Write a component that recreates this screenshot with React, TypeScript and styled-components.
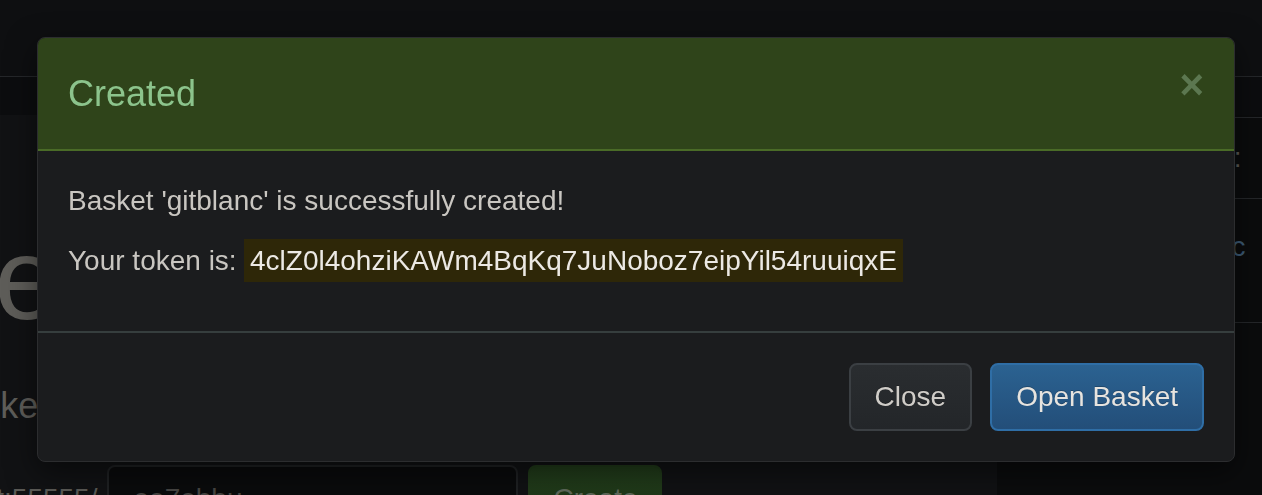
import React from 'react';
import styled, {createGlobalStyle} from 'styled-components';

const GlobalStyle = createGlobalStyle`
  html, body {
    margin: 0;
    padding: 0;
    background: #0e0f11;
    overflow: hidden;
  }
  body {
    font-family: "Liberation Sans", Arial, Helvetica, sans-serif;
  }
  * { box-sizing: border-box; }
`;

const Page = styled.div`
  width: 1262px;
  height: 495px;
  overflow: hidden;
  background: #0e0f11;
`;

const Navbar = styled.div`
  height: 77px;
  border-bottom: 1px solid #25272a;
`;

const SubBar = styled.div`
  height: 38px;
  background: #0c0d0f;
`;

const Main = styled.div`
  display: flex;
  height: 400px;
`;

const LeftCol = styled.div`
  width: 997px;
  flex: none;
  background: #111214;
  overflow: hidden;
`;

const Jumbotron = styled.div`
  width: 1200px;
  margin-left: -380px;
  padding-top: 101px;
  text-align: center;
  color: #5e5d59;
`;

const BigTitle = styled.h1`
  margin: 0 0 37px;
  font-size: 116px;
  line-height: 1.1;
  font-weight: normal;
`;

const Lead = styled.p`
  margin: 0 0 34px;
  font-size: 36px;
  line-height: 1.4;
`;

const FormRow = styled.div`
  display: flex;
  justify-content: center;
  align-items: center;
  gap: 10px;
  padding-left: 46px;
`;

const Label = styled.label`
  font-size: 28px;
  color: #5b5a56;
`;

const NameInput = styled.div`
  width: 411px;
  height: 68px;
  padding: 0 24px;
  background: #0a0b0c;
  border: 2px solid #1f2123;
  border-radius: 8px;
  font-size: 28px;
  line-height: 64px;
  color: #474643;
  text-align: left;
`;

const CreateButton = styled.div`
  width: 134px;
  height: 68px;
  background: linear-gradient(#223d1b, #1c3316);
  border: 2px solid #213a1a;
  border-radius: 8px;
  font-size: 28px;
  line-height: 64px;
  color: #5f6a5b;
`;

const RightCol = styled.div`
  flex: 1;
  background: #0b0c0d;
  padding-top: 2px;
`;

const PanelRow = styled.div<{$indent: number; $height: number}>`
  height: ${p => p.$height}px;
  padding: ${p => (p.$height > 100 ? 28 : 20)}px 0 0 ${p => p.$indent}px;
  border-top: 1px solid #25272a;
  font-size: 28px;
  line-height: 40px;
  color: #5b5a56;
  white-space: nowrap;
`;

const BasketLink = styled.span`
  color: #3d5b76;
`;

const ModalLayer = styled.div`
  position: fixed;
  inset: 0;
  padding: 37px 0 0 37px;
`;

const Dialog = styled.div`
  width: 1198px;
  background: #1b1c1e;
  border: 1px solid #2c2d2f;
  border-radius: 8px;
  box-shadow: 0 10px 30px rgba(0, 0, 0, 0.5);
  overflow: hidden;
`;

const Header = styled.div`
  padding: 30px;
  background: #2f441a;
  border-bottom: 2px solid #4a6b27;
`;

const CloseX = styled.span`
  float: right;
  margin-top: -4px;
  font-size: 42px;
  font-weight: bold;
  line-height: 1;
  color: #5c7750;
`;

const Title = styled.h4`
  margin: 0;
  font-size: 36px;
  line-height: 51px;
  font-weight: normal;
  color: #8cc48c;
`;

const Body = styled.div`
  padding: 30px;
  font-size: 28px;
  line-height: 40px;
  color: #c9c6c1;
  p {
    margin: 0 0 20px;
  }
`;

const Token = styled.mark`
  padding: 5.6px;
  background: #2e2708;
  color: #ece9e4;
`;

const Footer = styled.div`
  display: flex;
  justify-content: flex-end;
  gap: 18px;
  padding: 30px;
  border-top: 2px solid #363e3e;
`;

const Button = styled.button<{$primary?: boolean}>`
  height: 68px;
  padding: 0 24px;
  font-family: "Liberation Sans", Arial, Helvetica, sans-serif;
  font-size: 28px;
  line-height: 64px;
  border-radius: 8px;
  border: 2px solid ${p => (p.$primary ? '#2f6ea6' : '#3b3f43')};
  background: ${p => (p.$primary
    ? 'linear-gradient(#2b6291, #234e79)'
    : 'linear-gradient(#2a2d30, #232629)')};
  color: ${p => (p.$primary ? '#e7e4df' : '#d0cdc8')};
  text-shadow: 0 -1px 0 rgba(0, 0, 0, 0.2);
`;

export default function App() {
  return (
    <Page>
      <GlobalStyle/>
      <Navbar/>
      <SubBar/>
      <Main>
        <LeftCol>
          <Jumbotron>
            <BigTitle>New Basket</BigTitle>
            <Lead>Create a basket to collect and inspect HTTP requests</Lead>
            <FormRow>
              <Label>http://localhost:55555/</Label>
              <NameInput>ee7ebbu</NameInput>
              <CreateButton>Create</CreateButton>
            </FormRow>
          </Jumbotron>
        </LeftCol>
        <RightCol>
          <PanelRow $indent={92} $height={81}>My Baskets:</PanelRow>
          <PanelRow $indent={152} $height={124}>
            <BasketLink>gitblanc</BasketLink>
          </PanelRow>
          <PanelRow $indent={152} $height={100}/>
        </RightCol>
      </Main>

      <ModalLayer>
        <Dialog>
          <Header>
            <CloseX>×</CloseX>
            <Title>Created</Title>
          </Header>
          <Body>
            <p>Basket 'gitblanc' is successfully created!</p>
            <p>Your token is: <Token>4clZ0l4ohziKAWm4BqKq7JuNoboz7eipYil54ruuiqxE</Token></p>
          </Body>
          <Footer>
            <Button>Close</Button>
            <Button $primary>Open Basket</Button>
          </Footer>
        </Dialog>
      </ModalLayer>
    </Page>
  );
}
